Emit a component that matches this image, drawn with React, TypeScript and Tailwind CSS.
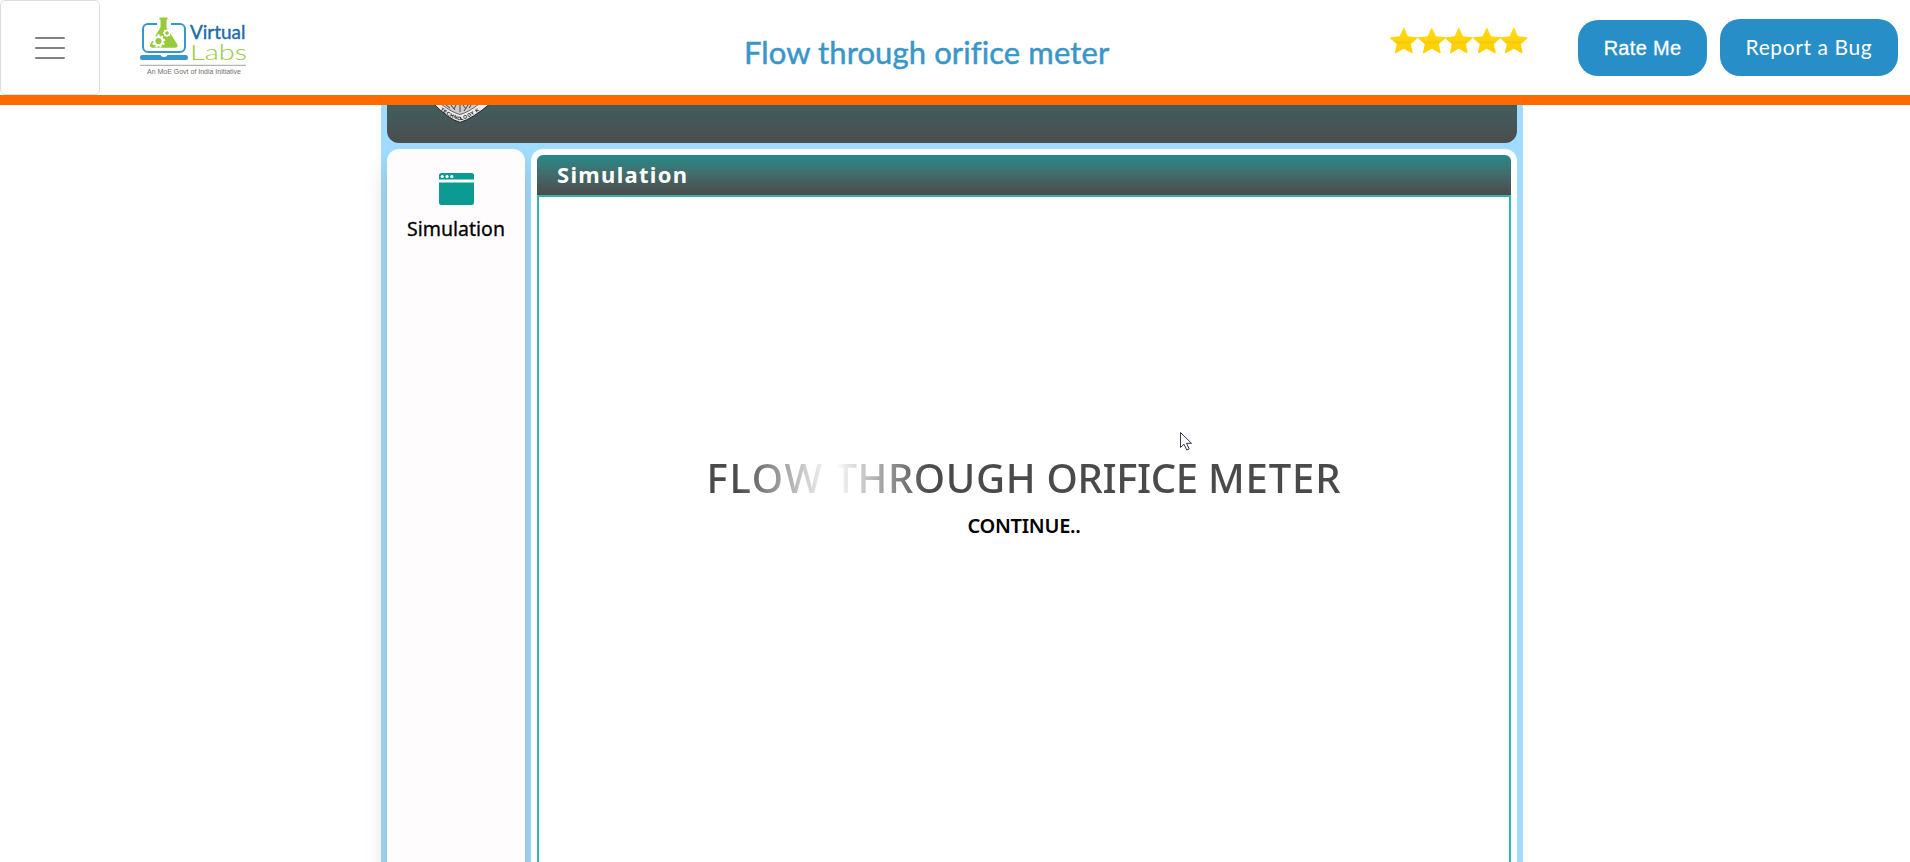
import React from "react";

const gear = (cx: number, cy: number, r: number, n: number) =>
  Array.from({ length: n }, (_, i) => {
    const a = (i * 360) / n;
    return <rect key={i} x={cx - r * 0.2} y={cy - r * 1.3} width={r * 0.4} height={r * 0.7} fill="#fff" transform={`rotate(${a} ${cx} ${cy})`} />;
  });

function Logo() {
  return (
    <svg width="110" height="62" viewBox="139 16 110 62" className="block">
      <rect x="143" y="24" width="42" height="28" rx="5" fill="none" stroke="#3796cb" strokeWidth="2" />
      <path d="M157 21h14v6h-14z" fill="#fff" />
      <path d="M159.500 17.500h8v2h-1v8l10.600 16.500q1.600 3.500-2 3.700h-22.500q-4-.3-2.200-3.700L160.500 27.500v-8h-1z" fill="#97ca3d" stroke="#fff" strokeWidth="1" paintOrder="stroke" />
      {gear(158.500, 41, 5.2, 9)}
      <circle cx="158.500" cy="41" r="4.200" fill="#97ca3d" stroke="#fff" strokeWidth="2.200" />
      {gear(167, 33, 3.100, 8)}
      <circle cx="167" cy="33" r="2.600" fill="#97ca3d" stroke="#fff" strokeWidth="1.500" />
      <path d="M142 55h18.500q.5 2 3.500 2t3.500-2H186q2 0 2 2.500t-2 2.500H142q-2 0-2-2.500t2-2.500z" fill="#3796cb" />
      <text x="190" y="38.700" fontFamily="Lato" fontSize="19.500" fill="#1d6ba5" stroke="#1d6ba5" strokeWidth=".4" textLength="55.500" lengthAdjust="spacingAndGlyphs">Virtual</text>
      <text x="190" y="60" fontFamily="Lato" fontWeight="300" fontSize="21" fill="#97ca3d" textLength="57" lengthAdjust="spacingAndGlyphs">Labs</text>
      <path d="M140 65.300h106" stroke="#8c8c8c" strokeWidth=".8" />
      <text x="147" y="74" fontFamily="Liberation Sans" fontSize="7.200" fill="#6f6f6f" textLength="94" lengthAdjust="spacingAndGlyphs">An MoE Govt of India Initiative</text>
    </svg>
  );
}

function Star() {
  return (
    <svg width="27.600" height="28" viewBox="0 0 27.600 28" className="block shrink-0">
      <defs>
        <linearGradient id="gold" x1="0" y1="0" x2="0" y2="1">
          <stop offset="0" stopColor="#ffdb0c" />
          <stop offset=".5" stopColor="#ffd30a" />
          <stop offset=".56" stopColor="#f9c900" />
          <stop offset=".68" stopColor="#ffd20a" />
          <stop offset="1" stopColor="#ffcf00" />
        </linearGradient>
      </defs>
      <path d="M13.800 1q.5 0 .8.8l3.300 7.500 9 .9q1.300.4.2 1.500l-6.300 5.400 1.800 8.100q.1 1.400-1.200.8l-7.600-4.200-7.600 4.200q-1.300.6-1.200-.8l1.800-8.100L.5 11.700q-1.100-1.100.2-1.500l9-.9L13 1.800q.3-.8.8-.8z" fill="url(#gold)" />
    </svg>
  );
}

function Crest() {
  return (
    <svg width="60" height="19" viewBox="430 105 60 19" className="block">
      <defs><path id="crestArc" d="M439 109.500Q450 117.500 460 120.500Q470 117.500 482 109" /></defs>
      <path d="M433 103Q448 119 460 122.300Q472 119 491 103z" fill="#eee" stroke="#1c1c1c" strokeWidth=".9" />
      <path d="M441 104Q452 112.500 460 114.500Q468 112.500 479 104z" fill="#ccc" stroke="#333" strokeWidth=".7" />
      <path d="M446 105l4 3m1-3l4 5m1-5l-2 4m6-4v7m3-7l3 4m2-4l-4 6m7-6l-2 3" stroke="#444" strokeWidth="1" />
      <text fontFamily="Liberation Sans" fontWeight="700" fontSize="5" fill="#111">
        <textPath href="#crestArc" startOffset="1" textLength="45">TECHNOLOGY K</textPath>
      </text>
    </svg>
  );
}

export default function App() {
  return (
    <div className="relative flex h-[862px] w-full flex-col overflow-hidden bg-white">
      <header className="z-20 flex h-[105px] shrink-0 items-start border-b-[10px] border-[#ff6a00] bg-white">
        <button className="flex h-[95px] w-[100px] shrink-0 flex-col items-center justify-center gap-2 rounded-[5px] border border-[#dedede]" aria-label="Menu">
          <span className="h-0.5 w-[30px] rounded bg-[#808080]" />
          <span className="h-0.5 w-[30px] rounded bg-[#808080]" />
          <span className="h-0.5 w-[30px] rounded bg-[#808080]" />
        </button>
        <div className="ml-[39px] mt-4 w-[110px] shrink-0"><Logo /></div>
        <h1 className="ml-[495px] mt-[30px] w-[380px] shrink-0 whitespace-nowrap font-['Lato'] text-[31px] leading-[44px] tracking-[0.1px] text-[#3a96c8] [-webkit-text-stroke:0.5px_#3a96c8]">Flow through orifice meter</h1>
        <div className="ml-[266px] mt-[27px] flex shrink-0"><Star /><Star /><Star /><Star /><Star /></div>
        <button className="ml-[50px] mt-5 h-14 w-[129px] shrink-0 rounded-[20px] bg-[#288ec8] font-['Liberation_Sans'] text-xl tracking-[0.3px] text-white [-webkit-text-stroke:0.3px_white]">Rate Me</button>
        <button className="ml-[13px] mt-[19px] h-[57px] w-[178px] shrink-0 whitespace-nowrap rounded-[20px] bg-[#288ec8] pb-0.5 font-['Lato'] text-[21px] tracking-[0.6px] text-white">Report a Bug</button>
      </header>

      <main className="ml-[381px] flex w-[1142px] grow flex-col bg-[#9fdcff] px-1.5">
        <div className="h-[38px] shrink-0 rounded-b-xl bg-linear-to-b from-[#3f5f5e] to-[#4b4d4d] pl-[43px]"><Crest /></div>
        <div className="mt-1.5 flex grow gap-1.5">
          <aside className="flex w-[138px] flex-col items-center rounded-t-xl bg-[#fffcfd] pt-6 shadow-[0_18px_20px_rgba(130,120,105,0.38)]">
            <svg width="35" height="32" viewBox="0 0 35 32" className="block">
              <path d="M2.500 0h30Q35 0 35 2.500V6.500H0V2.500Q0 0 2.500 0zM0 9.500h35v20q0 2.500-2.500 2.500h-30Q0 32 0 29.500z" fill="#0b9b93" />
              <circle cx="3.200" cy="3.500" r="1.600" fill="#fff" /><circle cx="8" cy="3.500" r="1.600" fill="#fff" /><circle cx="12.800" cy="3.500" r="1.600" fill="#fff" />
            </svg>
            <span className="mt-2.5 font-['Noto_Sans'] text-[19.500px] leading-7 text-black [-webkit-text-stroke:0.3px_black]">Simulation</span>
          </aside>
          <section className="z-10 flex w-[986px] flex-col rounded-t-xl bg-white px-1.5 pt-1.5">
            <h2 className="h-10 shrink-0 rounded-t-md bg-linear-to-b from-[#208b8a] to-[#4b4b4b] pl-5 font-['Noto_Sans'] text-[22px] font-bold leading-[38px] tracking-[1.3px] text-white">Simulation</h2>
            <div className="flex grow flex-col items-center border-x-2 border-t-2 border-[#36b3aa] pt-[251px]">
              <p className="whitespace-nowrap bg-[linear-gradient(90deg,#4a4a4a_0,#4a4a4a_30px,#fff_124px,#fff_128px,#4a4a4a_222px)] bg-clip-text font-['Noto_Sans'] text-[40px] font-medium leading-[60px] text-transparent">
                <span className="tracking-[1.8px]">FLOW</span> <span className="tracking-[0.6px]">THROUGH</span> <span className="tracking-[-0.4px]">ORIFICE</span> <span className="tracking-[0.9px]">METER</span>
              </p>
              <p className="whitespace-nowrap font-['Noto_Sans'] text-xl font-semibold leading-9 tracking-[-0.250px] text-black">CONTINUE..</p>
            </div>
          </section>
        </div>
      </main>
      <svg width="13" height="20" viewBox="0 0 13 20" className="absolute left-[1180px] top-[432px] z-20">
        <path d="M.5.5v15l3.500-3.300 2.800 5.900 2.400-1.200-2.700-5.600h5z" fill="#fff" stroke="#20203a" strokeWidth=".9" />
      </svg>
    </div>
  );
}
